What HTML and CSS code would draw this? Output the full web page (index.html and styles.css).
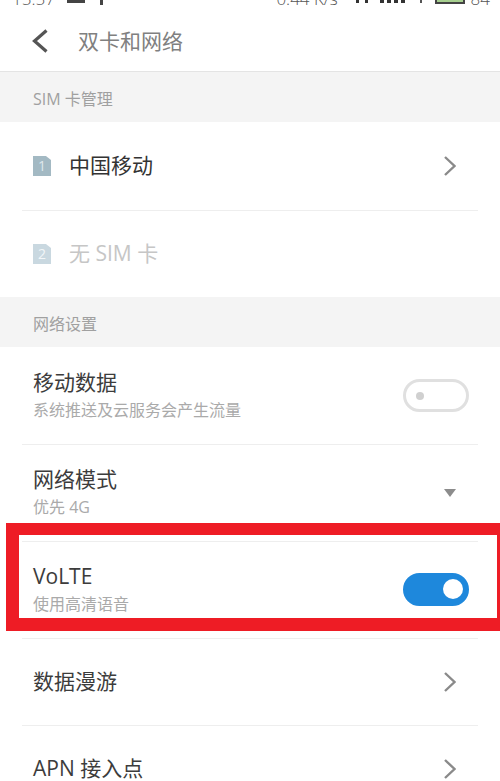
FILE: index.html
```html
<!DOCTYPE html>
<html lang="zh-CN">
<head>
  <meta charset="UTF-8" />
  <meta name="viewport" content="width=device-width, initial-scale=1.0"/>
  <title>双卡和网络</title>
  <link rel="stylesheet" href="styles.css">
</head>
<body>
  <div class="phone">
    <!-- the screenshot cuts the status bar off, only the bottom few pixels show -->
    <div class="status">
      <div class="status-side">
        <span class="clock">15:57</span>
        <span class="mail"></span>
        <span class="dl"></span>
      </div>
      <div class="status-side">
        <span class="speed">0.44 K/s</span>
        <span class="dots"><i></i><i></i></span>
        <span class="bars"><i></i><i></i><i></i><i></i></span>
        <span class="wifi"></span>
        <span class="batt"></span>
        <span class="level">84</span>
      </div>
    </div>

    <div class="topbar">
      <svg class="back" width="16" height="24" viewBox="0 0 16 24"><path d="M14.5 1.5 L2.5 12 L14.5 22.5" fill="none" stroke="#555" stroke-width="3.2"/></svg>
      <span class="title">双卡和网络</span>
    </div>

    <div class="section">SIM 卡管理</div>
    <div class="row sim first">
      <span class="sim-icon">1</span>
      <span class="sim-name">中国移动</span>
      <svg class="chev" width="12" height="20" viewBox="0 0 12 20"><path d="M1 1 L10.5 10 L1 19" fill="none" stroke="#8a8a8a" stroke-width="2.4"/></svg>
    </div>
    <div class="row sim off">
      <span class="sim-icon">2</span>
      <span class="sim-name">无 SIM 卡</span>
    </div>

    <div class="section">网络设置</div>
    <div class="row tall top">
      <div>
        <div class="name">移动数据</div>
        <div class="sub">系统推送及云服务会产生流量</div>
      </div>
      <span class="switch"><b></b></span>
    </div>
    <div class="row tall">
      <div>
        <div class="name">网络模式</div>
        <div class="sub">优先 4G</div>
      </div>
      <span class="tri"></span>
    </div>
    <div class="row tall">
      <div>
        <div class="name">VoLTE</div>
        <div class="sub">使用高清语音</div>
      </div>
      <span class="switch on"><b></b></span>
    </div>
    <div class="row plain">
      <div class="name">数据漫游</div>
      <svg class="chev" width="12" height="20" viewBox="0 0 12 20"><path d="M1 1 L10.5 10 L1 19" fill="none" stroke="#8a8a8a" stroke-width="2.4"/></svg>
    </div>
    <div class="row plain">
      <div class="name">APN 接入点</div>
      <svg class="chev" width="12" height="20" viewBox="0 0 12 20"><path d="M1 1 L10.5 10 L1 19" fill="none" stroke="#8a8a8a" stroke-width="2.4"/></svg>
    </div>

    <div class="redbox"></div>
  </div>
</body>
</html>
```

FILE: styles.css
```css
* {
  box-sizing: border-box;
}

html, body {
  margin: 0;
  padding: 0;
}

body {
  font-family: "Open Sans", "Noto Sans CJK SC", sans-serif;
  background: #fff;
  color: #333;
}

.phone {
  position: relative;
  width: 500px;
  height: 781px;
  overflow: hidden;
}

.status {
  height: 5px;
  padding: 0 10px 0 12px;
  display: flex;
  justify-content: space-between;
  align-items: flex-start;
  overflow: hidden;
  font-size: 17px;
  font-weight: 300;
  line-height: 18px;
  color: #555;
}

.status-side {
  display: flex;
  align-items: flex-end;
  height: 8px;
}

.mail {
  width: 18px;
  height: 6px;
  margin: 0 0 5px 12px;
  background: #444;
}

.dl {
  width: 3px;
  height: 6px;
  margin: 0 0 3px 15px;
  background: #444;
}

.dots {
  display: flex;
  gap: 6px;
  margin: 0 0 5px 18px;
}

.dots i {
  width: 3px;
  height: 3px;
  background: #333;
}

.bars {
  display: flex;
  gap: 3px;
  margin: 0 0 5px 12px;
}

.bars i {
  width: 4px;
  height: 6px;
  background: #333;
}

.wifi {
  width: 2px;
  height: 3px;
  margin: 0 0 5px 15px;
  background: #555;
}

.batt {
  width: 30px;
  height: 6px;
  margin: 0 6px 4px 13px;
  background: #a6cf8f;
  border: 2px solid #444;
  border-top: none;
}

.topbar {
  height: 67px;
  display: flex;
  align-items: center;
  border-bottom: 1px solid #e4e4e4;
  padding: 6px 0 0 32px;
}

.back {
  margin-right: 30px;
}

.title {
  font-size: 21px;
  color: #808080;
  margin-bottom: 2px;
}

.section {
  height: 50px;
  background: #f4f4f4;
  padding-left: 33px;
  font-size: 16px;
  line-height: 54px;
  color: #a0a0a0;
}

.row {
  height: 87px;
  margin: 0 22px;
  display: flex;
  align-items: center;
  justify-content: space-between;
  padding: 0 9px 0 11px;
  border-bottom: 1px solid #eee;
}

.first {
  height: 89px;
}

.tall {
  height: 97px;
}

.top {
  height: 98px;
}

.sim {
  justify-content: flex-start;
}

.sim .chev {
  margin-left: auto;
}

.chev {
  margin-right: 13px;
}

.sim-icon {
  width: 18px;
  height: 20px;
  background: #a3b9c3;
  color: #dfe8ec;
  font-size: 14px;
  line-height: 20px;
  text-align: center;
  margin-right: 18px;
  clip-path: polygon(0 0, 72% 0, 100% 20%, 100% 100%, 0 100%);
}

.sim-name {
  font-size: 21px;
  color: #333;
  margin-bottom: 4px;
}

.off {
  height: 86px;
  border-bottom: none;
}

.off .sim-icon {
  background: #c9d8e0;
  color: #f2f6f8;
}

.off .sim-name {
  color: #c6c6c6;
}

.name {
  font-size: 21px;
  line-height: 28px;
  color: #3c3c3c;
}

.plain .name {
  margin-bottom: 3px;
}

.sub {
  font-size: 16px;
  line-height: 28px;
  color: #aaa;
}

.switch {
  width: 66px;
  height: 33px;
  border: 3px solid #e0e0e0;
  border-radius: 17px;
  display: flex;
  align-items: center;
  padding-left: 10px;
}

.switch b {
  width: 8px;
  height: 8px;
  border-radius: 50%;
  background: #d0d0d0;
}

.switch.on {
  background: #1e88dc;
  border-color: #1e88dc;
  padding-left: 37px;
  margin-bottom: 2px;
}

.switch.on b {
  width: 20px;
  height: 20px;
  background: #fff;
}

.tri {
  width: 0;
  height: 0;
  margin-right: 13px;
  border-left: 6px solid transparent;
  border-right: 6px solid transparent;
  border-top: 8px solid #8c8c8c;
}

.redbox {
  position: absolute;
  left: 6px;
  top: 523px;
  width: 494px;
  height: 108px;
  border: solid #ee1c25;
  border-width: 12px 3px 13px 13px;
}
```
